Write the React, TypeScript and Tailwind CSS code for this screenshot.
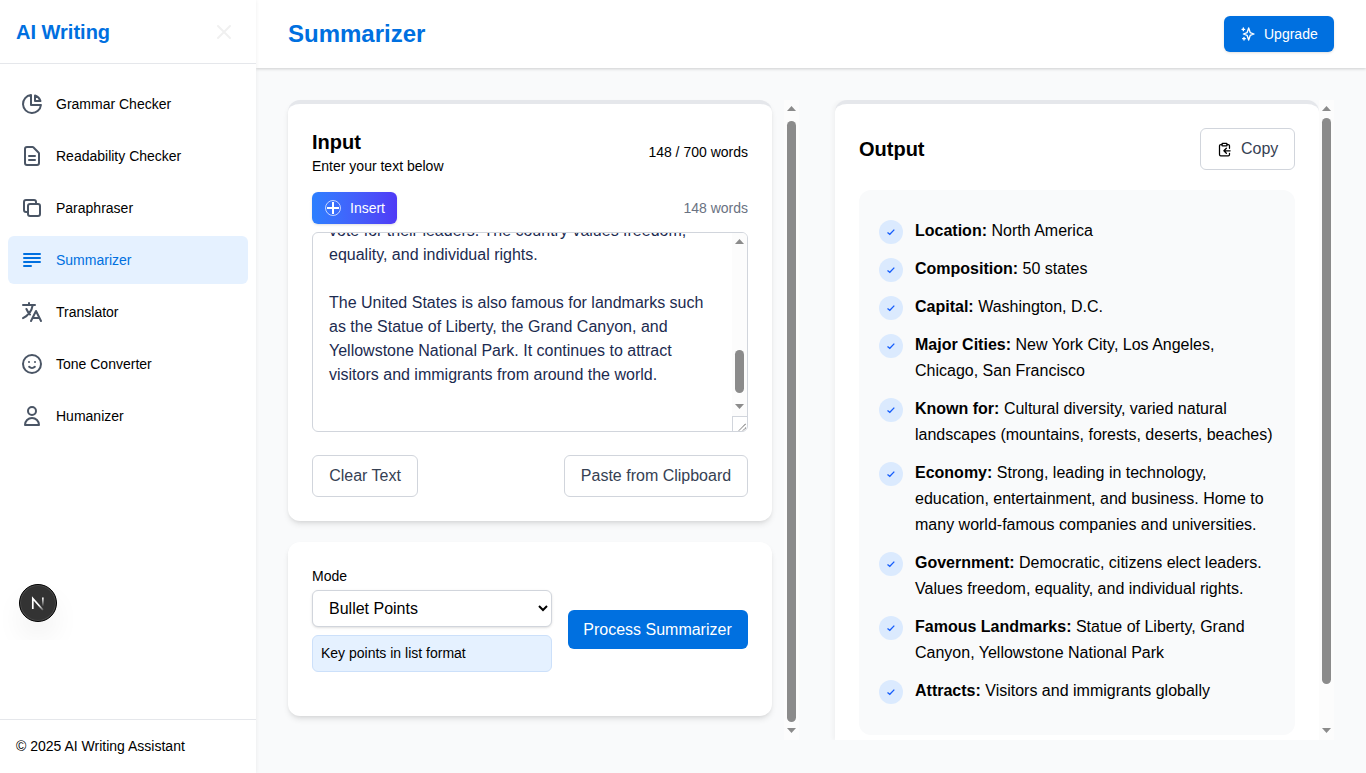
import type { ReactNode } from "react";

function Icon({ size = 24, width = 2, className = "", children }: { size?: number; width?: number; className?: string; children: ReactNode }) {
  return (
    <svg
      width={size}
      height={size}
      viewBox="0 0 24 24"
      fill="none"
      stroke="currentColor"
      strokeWidth={width}
      strokeLinecap="round"
      strokeLinejoin="round"
      className={`shrink-0 ${className}`}
    >
      {children}
    </svg>
  );
}

const nav = [
  {
    label: "Grammar Checker",
    icon: (
      <>
        <path d="M11 3.055A9.001 9.001 0 1020.945 13H11V3.055z" />
        <path d="M20.488 9H15V3.512A9.025 9.025 0 0120.488 9z" />
      </>
    ),
  },
  {
    label: "Readability Checker",
    icon: <path d="M9 12h6m-6 4h6m2 5H7a2 2 0 01-2-2V5a2 2 0 012-2h5.586a1 1 0 01.707.293l5.414 5.414a1 1 0 01.293.707V19a2 2 0 01-2 2z" />,
  },
  {
    label: "Paraphraser",
    icon: <path d="M8 16H6a2 2 0 01-2-2V6a2 2 0 012-2h8a2 2 0 012 2v2m-6 12h8a2 2 0 002-2v-8a2 2 0 00-2-2h-8a2 2 0 00-2 2v8a2 2 0 002 2z" />,
  },
  {
    label: "Summarizer",
    active: true,
    icon: <path d="M4 6h16M4 10h16M4 14h16M4 18h7" />,
  },
  {
    label: "Translator",
    icon: <path d="M3 5h12M9 3v2m1.048 9.5A18.022 18.022 0 016.412 9m6.088 9h7M11 21l5-10 5 10M12.751 5C11.783 10.77 8.07 15.61 3 18.129" />,
  },
  {
    label: "Tone Converter",
    icon: <path d="M14.828 14.828a4 4 0 01-5.656 0M9 10h.01M15 10h.01M21 12a9 9 0 11-18 0 9 9 0 0118 0z" />,
  },
  {
    label: "Humanizer",
    icon: <path d="M16 7a4 4 0 11-8 0 4 4 0 018 0zM12 14a7 7 0 00-7 7h14a7 7 0 00-7-7z" />,
  },
];

const points = [
  ["Location:", "North America"],
  ["Composition:", "50 states"],
  ["Capital:", "Washington, D.C."],
  ["Major Cities:", "New York City, Los Angeles, Chicago, San Francisco"],
  ["Known for:", "Cultural diversity, varied natural landscapes (mountains, forests, deserts, beaches)"],
  ["Economy:", "Strong, leading in technology, education, entertainment, and business. Home to many world-famous companies and universities."],
  ["Government:", "Democratic, citizens elect leaders. Values freedom, equality, and individual rights."],
  ["Famous Landmarks:", "Statue of Liberty, Grand Canyon, Yellowstone National Park"],
  ["Attracts:", "Visitors and immigrants globally"],
];

function Scrollbar({ thumb }: { thumb: string }) {
  return (
    <div className="flex w-[15px] shrink-0 flex-col items-center bg-[#fcfcfc] pt-[6px] pb-[7px]">
      <svg width="9" height="5" className="shrink-0">
        <path d="M0 5 4.5 0 9 5z" fill="#8b8b8b" />
      </svg>
      <div className={`w-[9px] shrink-0 rounded-full bg-[#8b8b8b] ${thumb}`} />
      <svg width="9" height="5" className="mt-auto shrink-0">
        <path d="M0 0h9L4.500 5z" fill="#8b8b8b" />
      </svg>
    </div>
  );
}

function Sidebar() {
  return (
    <aside className="relative z-10 flex w-64 shrink-0 flex-col bg-white shadow-[0_0_4px_rgba(0,0,0,0.07)]">
      <div className="flex h-16 shrink-0 items-center justify-between border-b border-gray-200 pr-5 pl-4">
        <h1 className="text-xl font-bold text-[#0070e0]">AI Writing</h1>
        <Icon className="text-[#f0f0f0]">
          <path d="M6 18L18 6M6 6l12 12" />
        </Icon>
      </div>
      <nav className="flex flex-col gap-1 px-2 pt-4">
        {nav.map((n) => (
          <a
            key={n.label}
            className={`flex h-12 items-center gap-3 rounded-md px-3 text-sm ${n.active ? "bg-[#e5f1ff] text-[#0070e0]" : "text-black"}`}
          >
            <Icon className={n.active ? "" : "text-gray-600"}>{n.icon}</Icon>
            <span>{n.label}</span>
          </a>
        ))}
      </nav>
      <div className="absolute top-[560px] left-0 h-20 w-20 overflow-hidden">
        <div className="absolute top-6 left-[19px] flex h-[38px] w-[38px] items-center justify-center rounded-full border border-black bg-[#333] shadow-[inset_0_0_0_1px_#4a4a4a,0_16px_32px_-8px_rgba(0,0,0,0.16)]">
          <svg width="14" height="16" viewBox="0 0 14 16" fill="none" strokeWidth="1.500">
            <defs>
              <linearGradient id="fadeStem" x1="0" y1="0" x2="0" y2="1">
                <stop offset="0" stopColor="#fff" />
                <stop offset="1" stopColor="#fff" stopOpacity="0" />
              </linearGradient>
              <linearGradient id="fadeDiagonal" x1="0" y1="0" x2="1" y2="1">
                <stop offset="0.6" stopColor="#fff" />
                <stop offset="1" stopColor="#fff" stopOpacity="0.2" />
              </linearGradient>
            </defs>
            <path d="M1.800 14V3.500L12 15" stroke="url(#fadeDiagonal)" strokeWidth="1.700" />
            <rect x="11" y="2.500" width="1.700" height="9" fill="url(#fadeStem)" />
          </svg>
        </div>
      </div>
      <footer className="mt-auto h-[54px] shrink-0 border-t border-gray-200 px-4 pt-4 text-sm text-black">© 2025 AI Writing Assistant</footer>
    </aside>
  );
}

function InputCard() {
  return (
    <section className="h-[421px] w-[484px] rounded-xl border-t-4 border-gray-200 bg-white px-6 pt-6 shadow-md">
      <div className="flex items-center justify-between">
        <div>
          <h3 className="text-xl leading-7 font-bold">Input</h3>
          <p className="text-sm">Enter your text below</p>
        </div>
        <span className="text-sm">148 / 700 words</span>
      </div>
      <div className="mt-4 flex items-center justify-between">
        <button className="flex h-8 w-[85px] items-center gap-[9px] rounded-md bg-linear-to-r from-[#2b7fff] to-[#4f39f6] pl-[13px] text-sm font-medium text-white shadow-sm">
          <svg width="16" height="16" viewBox="0 0 16 16" fill="none" stroke="white" className="shrink-0">
            <circle cx="8" cy="8" r="7.500" strokeOpacity="0.7" />
            <path d="M8 2v12M2 8h12" strokeWidth="2" />
          </svg>
          Insert
        </button>
        <span className="text-sm text-gray-500">148 words</span>
      </div>
      <div className="mt-2 flex h-[200px] overflow-hidden rounded-md border border-gray-300">
        <div className="flex flex-1 flex-col justify-end overflow-hidden pb-[44px] pl-4 leading-6 whitespace-nowrap text-[#1c2b50]">
          <p>
            vote for their leaders. The country values freedom,
            <br />
            equality, and individual rights.
          </p>
          <p className="mt-6">
            The United States is also famous for landmarks such
            <br />
            as the Statue of Liberty, the Grand Canyon, and
            <br />
            Yellowstone National Park. It continues to attract
            <br />
            visitors and immigrants from around the world.
          </p>
        </div>
        <div className="flex w-[15px] flex-col">
          <div className="flex h-[183px]">
            <Scrollbar thumb="mt-[106px] h-[43px]" />
          </div>
          <div className="w-[15px] flex-1 border-t border-l border-gray-300">
            <svg width="14" height="14" fill="none" stroke="#444" strokeWidth="1" strokeDasharray="1.200 0.400">
              <path d="M6 13.500 13 6.500M10 13.500 13 10.500" />
            </svg>
          </div>
        </div>
      </div>
      <div className="mt-[23px] flex justify-between text-gray-700">
        <button className="h-[42px] w-[106px] rounded-md border border-gray-300">Clear Text</button>
        <button className="h-[42px] w-[184px] rounded-md border border-gray-300">Paste from Clipboard</button>
      </div>
    </section>
  );
}

function ModeCard() {
  return (
    <section className="mt-[21px] flex h-[174px] w-[484px] gap-4 rounded-xl bg-white p-6 shadow-md">
      <div className="flex w-60 flex-col">
        <label className="text-sm">Mode</label>
        <select className="mt-1 h-[37px] w-60 rounded-md border border-gray-300 bg-white px-3 shadow-sm">
          <option>Bullet Points</option>
        </select>
        <p className="mt-2 h-[37px] rounded-md border border-[#cce0fa] bg-[#e5f1ff] px-2 text-sm leading-[35px]">Key points in list format</p>
      </div>
      <button className="mt-11 h-[39px] w-[180px] rounded-md bg-[#0070e0] pr-px font-medium text-white">Process Summarizer</button>
    </section>
  );
}

function OutputCard() {
  return (
    <section className="h-[640px] w-[484px] rounded-t-xl border-t-4 border-gray-200 bg-white px-6 pt-6 shadow-[-2px_0_4px_rgba(0,0,0,0.04)] [clip-path:inset(0_0_0_-8px)]">
      <div className="flex items-center justify-between">
        <h3 className="text-xl font-bold">Output</h3>
        <button className="flex h-[42px] w-[95px] items-center rounded-md border border-gray-300 pl-4 text-gray-700">
          <Icon size={15} className="mr-[9px] text-black">
            <rect x="8" y="2" width="8" height="4" rx="1" />
            <path d="M8 4H6a2 2 0 0 0-2 2v14a2 2 0 0 0 2 2h12a2 2 0 0 0 2-2v-2" />
            <path d="M16 4h2a2 2 0 0 1 2 2v4M21 14H11M15 10l-4 4 4 4" />
          </Icon>
          Copy
        </button>
      </div>
      <ul className="mt-5 flex h-[545px] flex-col gap-3 rounded-xl bg-gray-50 px-5 pt-[28.450px]">
        {points.map(([k, v]) => (
          <li key={k} className="flex gap-3 leading-[25.930px]">
            <span className="mt-[2px] -mb-1 flex h-6 w-6 shrink-0 items-center justify-center rounded-full bg-blue-100">
              <svg width="10" height="10" viewBox="0 0 10 10" fill="none" stroke="#155dfc" strokeWidth="1.300">
                <path d="M1.500 5.500 3.800 7.300 8.300 2.600" />
              </svg>
            </span>
            <p>
              <strong>{k}</strong> {v}
            </p>
          </li>
        ))}
      </ul>
    </section>
  );
}

export default function App() {
  return (
    <div className="flex h-[773px] w-full overflow-hidden bg-gray-50 text-base text-black [font-family:'Liberation_Sans',Arial,sans-serif]">
      <Sidebar />
      <div className="flex flex-1 flex-col">
        <header className="flex h-[68px] shrink-0 items-center justify-between bg-white px-8 shadow-[0_1px_3px_rgba(0,0,0,0.18)]">
          <h2 className="text-2xl font-bold text-[#0070e0]">Summarizer</h2>
          <button className="flex h-9 w-[110px] items-center gap-2 rounded-md bg-[#0070e0] pl-4 text-sm font-medium text-white shadow-sm">
            <Icon size={16}>
              <path d="M5 3v4M3 5h4M6 17v4m-2-2h4m5-16l2.286 6.857L21 12l-5.714 2.143L13 21l-2.286-6.857L5 12l5.714-2.143L13 3z" />
            </Icon>
            Upgrade
          </button>
        </header>
        <main className="flex justify-between px-8 pt-8">
          <div className="flex h-[640px] w-[511px] justify-between">
            <div>
              <InputCard />
              <ModeCard />
            </div>
            <Scrollbar thumb="mt-[10px] h-[601px]" />
          </div>
          <div className="flex h-[640px]">
            <OutputCard />
            <Scrollbar thumb="mt-[7px] h-[566px]" />
          </div>
        </main>
      </div>
    </div>
  );
}
